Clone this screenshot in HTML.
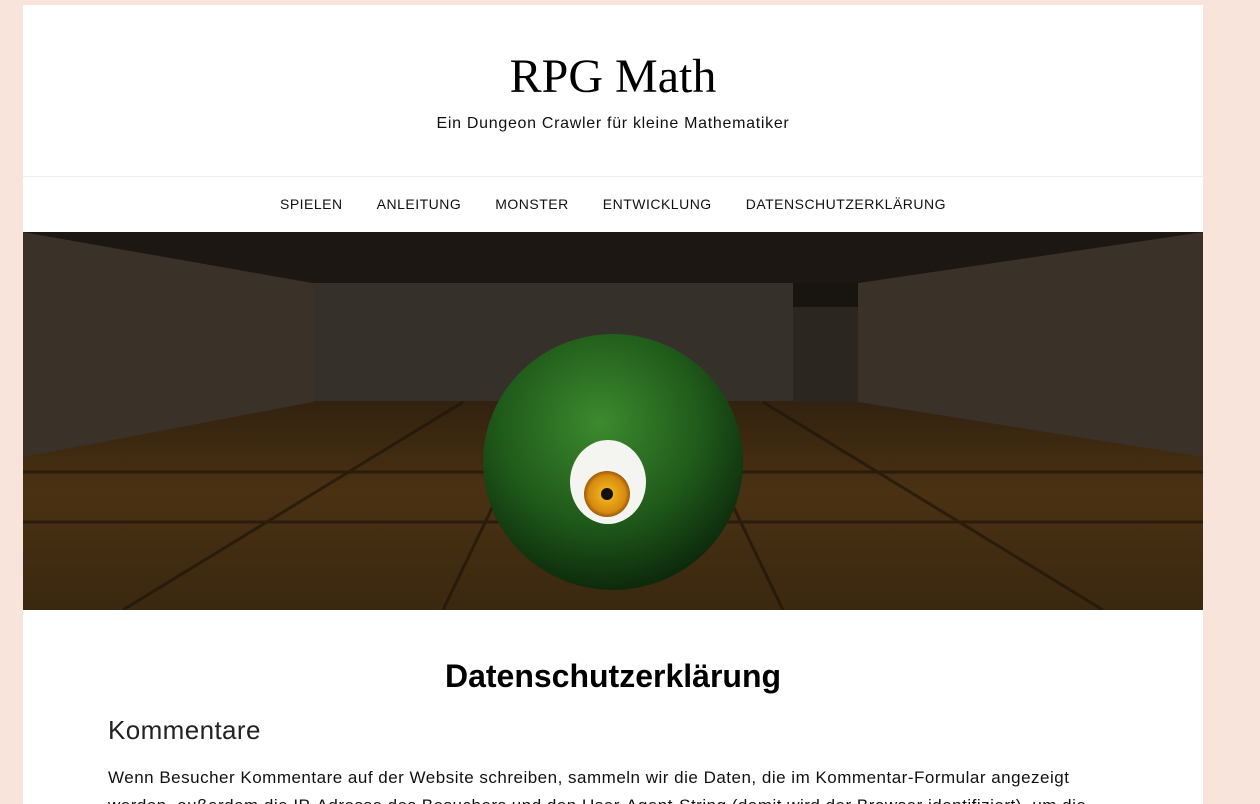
<!DOCTYPE html>
<html><head><meta charset="utf-8"><style>
html,body{margin:0;height:804px;overflow:hidden;}
body{background:#f9e4dc;font-family:"Liberation Sans",sans-serif;}
.wrap{position:absolute;left:23px;top:5px;width:1180px;height:799px;background:#fff;overflow:hidden;}
h1{position:absolute;top:43px;left:0;width:100%;text-align:center;margin:0;font:48px/1.2 "Liberation Serif",serif;color:#000;}
.tag{position:absolute;top:110px;width:100%;text-align:center;font-size:16px;letter-spacing:.7px;color:#111;}
.nav{position:absolute;top:171px;width:100%;height:55px;border-top:1px solid #eee;text-align:center;font-size:14px;line-height:55px;color:#111;letter-spacing:.5px;}
.nav span{margin:0 17px;}
.hero{position:absolute;top:227px;left:0;width:1180px;height:378px;}
h2{position:absolute;top:653px;width:100%;text-align:center;margin:0;font-size:32px;font-weight:bold;color:#000;}
h3{position:absolute;top:710px;left:85px;margin:0;font-size:26px;letter-spacing:.4px;font-weight:normal;color:#222;}
p{position:absolute;top:759px;left:85px;width:1000px;margin:0;font-size:17px;letter-spacing:.5px;line-height:28px;color:#111;white-space:nowrap;}
</style></head><body>
<div class="wrap">
<h1>RPG Math</h1>
<div class="tag">Ein Dungeon Crawler für kleine Mathematiker</div>
<div class="nav"><span>SPIELEN</span><span>ANLEITUNG</span><span>MONSTER</span><span>ENTWICKLUNG</span><span>DATENSCHUTZERKLÄRUNG</span></div>
<svg class="hero" viewBox="0 0 1180 378">
<defs>
<radialGradient id="g" cx="45%" cy="35%" r="65%"><stop offset="0" stop-color="#3d8a2e"/><stop offset=".6" stop-color="#1f5a1a"/><stop offset="1" stop-color="#0d2a0c"/></radialGradient>
<radialGradient id="y" cx="50%" cy="50%" r="50%"><stop offset="0" stop-color="#f8c020"/><stop offset=".8" stop-color="#d68a10"/><stop offset="1" stop-color="#a05a08"/></radialGradient>
<linearGradient id="f" x1="0" y1="0" x2="0" y2="1"><stop offset="0" stop-color="#2a1d0e"/><stop offset=".5" stop-color="#4a3112"/><stop offset="1" stop-color="#3a2810"/></linearGradient>
</defs>
<rect width="1180" height="378" fill="#181410"/>
<rect y="140" width="1180" height="238" fill="url(#f)"/>
<g stroke="#1e150a" stroke-width="3" fill="none" opacity=".7">
<path d="M0 290 L1180 290 M0 240 L1180 240 M100 378 L440 170 M1080 378 L740 170 M420 378 L520 170 M760 378 L660 170"/>
</g>
<polygon points="0,0 290,51 290,170 0,225" fill="#3a3128"/>
<polygon points="1180,0 835,51 835,170 1180,225" fill="#3a3128"/>
<rect x="290" y="51" width="480" height="118" fill="#36302a"/>
<rect x="770" y="75" width="65" height="95" fill="#2c2620"/>
<polygon points="0,0 1180,0 835,51 290,51" fill="#1c1712"/>
<ellipse cx="590" cy="230" rx="130" ry="128" fill="url(#g)"/>
<ellipse cx="585" cy="250" rx="38" ry="42" fill="#f4f4f0"/>
<circle cx="584" cy="262" r="23" fill="url(#y)"/>
<circle cx="584" cy="262" r="6" fill="#111"/>
</svg>
<h2>Datenschutzerklärung</h2>
<h3>Kommentare</h3>
<p>Wenn Besucher Kommentare auf der Website schreiben, sammeln wir die Daten, die im Kommentar-Formular angezeigt<br>werden, außerdem die IP-Adresse des Besuchers und den User-Agent-String (damit wird der Browser identifiziert), um die</p>
</div>
</body></html>
